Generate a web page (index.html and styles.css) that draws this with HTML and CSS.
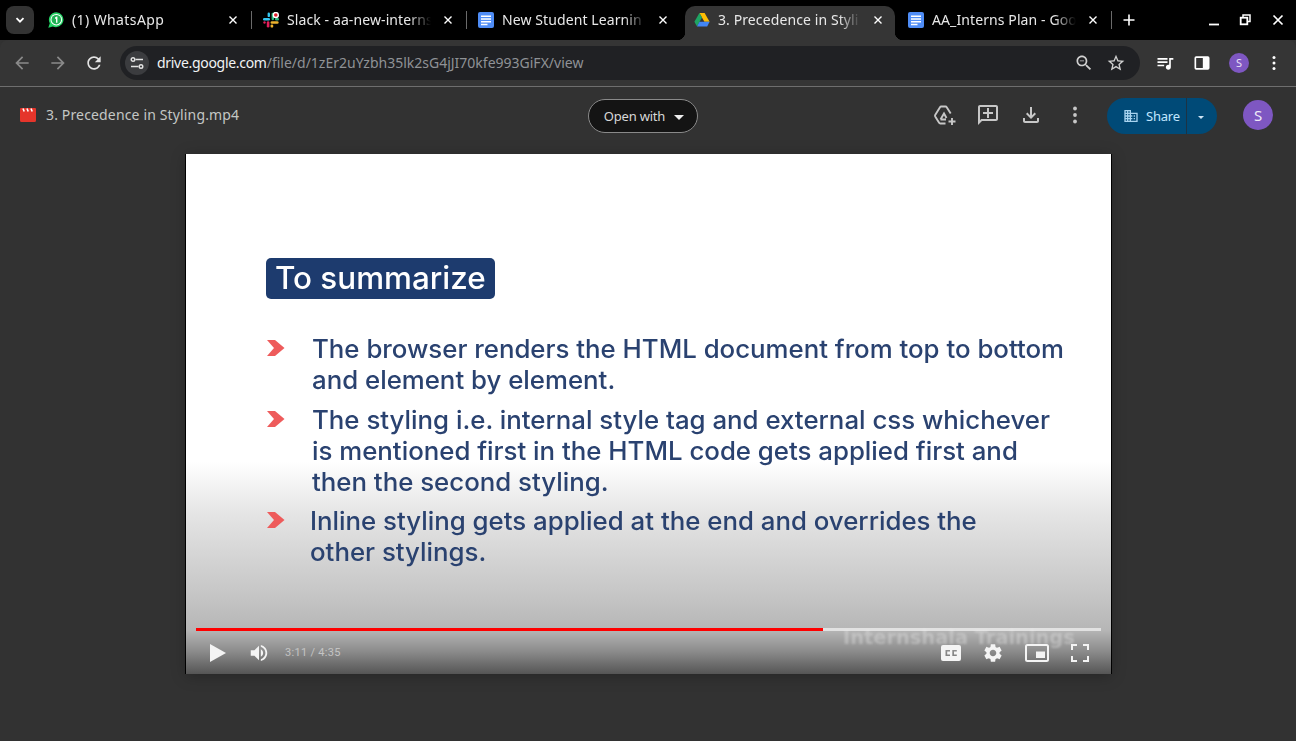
FILE: index.html
```html
<!DOCTYPE html>
<html lang="en">
<head>
    <meta charset="UTF-8">
    <meta name="viewport" content="width=device-width, initial-scale=1.0">
    <title>3. Precedence in Styling.mp4</title>
    <link rel="stylesheet" href="styles.css">
</head>
<body>

<!-- Tab strip -->
<div class="tabstrip">
    <div class="tab-search">
        <svg width="12" height="12" viewBox="0 0 12 12"><path d="M2.5 4.2 6 7.7l3.5-3.5" fill="none" stroke="#fff" stroke-width="1.8"/></svg>
    </div>
    <div class="tab">
        <svg class="favicon" viewBox="0 0 16 16"><path d="M8.3.3a7.4 7.4 0 0 0-6.5 11L.3 15.7l4.6-1.3A7.4 7.4 0 1 0 8.3.3z" fill="#25d366"/><circle cx="8.3" cy="7.7" r="5.8" fill="#fff"/><circle cx="8.3" cy="7.7" r="4.8" fill="#1fb254"/><path d="M7 5.6 8.7 4.6h.7v6.2H8V6.4l-1 .5z" fill="#fff"/></svg>
        <span class="tab-title tab-title-wide">(1) WhatsApp</span>
        <svg class="tab-close" viewBox="0 0 10 10"><path d="M1.5 1.5l7 7m0-7l-7 7" stroke="#fff" stroke-width="1.4"/></svg>
    </div>
    <div class="tab-sep"></div>
    <div class="tab">
        <svg class="favicon" viewBox="0 0 16 16">
            <rect x="0" y="6" width="7" height="2.4" rx="1.2" fill="#36c5f0"/><rect x="4.6" y="0.5" width="2.4" height="4.6" rx="1.2" fill="#36c5f0"/>
            <rect x="0.3" y="9.3" width="2.4" height="2.4" rx="1.2" fill="#e01e5a"/><rect x="3.8" y="9.3" width="2.6" height="6.2" rx="1.3" fill="#e01e5a"/>
            <rect x="8.6" y="0.8" width="2.4" height="7.4" rx="1.2" fill="#2eb67d"/><rect x="12" y="6" width="4" height="2.4" rx="1.2" fill="#2eb67d"/>
            <rect x="7.6" y="9.3" width="8" height="2.4" rx="1.2" fill="#ecb22e"/><rect x="7.6" y="12.4" width="2.6" height="3.2" rx="1.2" fill="#ecb22e"/>
            <circle cx="12.8" cy="3" r="3.2" fill="#fff"/><circle cx="12.8" cy="3" r="1.8" fill="#e01e2a"/>
        </svg>
        <span class="tab-title">Slack - aa-new-interns</span>
        <svg class="tab-close" viewBox="0 0 10 10"><path d="M1.5 1.5l7 7m0-7l-7 7" stroke="#fff" stroke-width="1.4"/></svg>
    </div>
    <div class="tab-sep"></div>
    <div class="tab">
        <svg class="favicon" viewBox="0 0 16 16"><rect width="16" height="16" rx="2" fill="#4f8df6"/><path d="M3 4.2h10M3 7h10M3 9.8h10M3 12.4h6.5" stroke="#fff" stroke-width="1.5"/></svg>
        <span class="tab-title">New Student Learnin</span>
        <svg class="tab-close" viewBox="0 0 10 10"><path d="M1.5 1.5l7 7m0-7l-7 7" stroke="#fff" stroke-width="1.4"/></svg>
    </div>
    <div class="tab tab-active">
        <svg class="favicon" viewBox="0 0 16 16"><path d="M5.4 1h5.2l5 8.8h-5.2z" fill="#fbbc04"/><path d="M5.4 1 .4 9.8 3 14.4 8 5.6z" fill="#1fa463"/><path d="M3 14.4h10.2l2.4-4.6H5.5z" fill="#4285f4"/></svg>
        <span class="tab-title">3. Precedence in Styli</span>
        <svg class="tab-close" viewBox="0 0 10 10"><path d="M1.5 1.5l7 7m0-7l-7 7" stroke="#fff" stroke-width="1.4"/></svg>
    </div>
    <div class="tab">
        <svg class="favicon" viewBox="0 0 16 16"><rect width="16" height="16" rx="2" fill="#4f8df6"/><path d="M3 4.2h10M3 7h10M3 9.8h10M3 12.4h6.5" stroke="#fff" stroke-width="1.5"/></svg>
        <span class="tab-title">AA_Interns Plan - Goo</span>
        <svg class="tab-close" viewBox="0 0 10 10"><path d="M1.5 1.5l7 7m0-7l-7 7" stroke="#fff" stroke-width="1.4"/></svg>
    </div>
    <div class="tab-sep"></div>
    <svg class="new-tab" viewBox="0 0 12 12"><path d="M6 .5v11M.5 6h11" stroke="#fff" stroke-width="1.6"/></svg>
    <div class="window-controls">
        <svg viewBox="0 0 12 12"><path d="M1 10.5h10" stroke="#fff" stroke-width="1.8"/></svg>
        <svg viewBox="0 0 12 12"><path d="M4 3V1h7v6.5H9" fill="none" stroke="#fff" stroke-width="1.5"/><rect x="1.7" y="3.7" width="6.6" height="6.6" fill="none" stroke="#fff" stroke-width="1.8"/></svg>
        <svg viewBox="0 0 12 12"><path d="M1.5 1.5l9 9m0-9l-9 9" stroke="#fff" stroke-width="1.7"/></svg>
    </div>
</div>

<!-- Address bar -->
<div class="toolbar">
    <svg class="tool-icon dim" viewBox="0 0 24 24"><path d="M20 11H7.83l5.59-5.59L12 4l-8 8 8 8 1.41-1.41L7.83 13H20v-2z"/></svg>
    <svg class="tool-icon dim" viewBox="0 0 24 24"><path d="M12 4l-1.41 1.41L16.17 11H4v2h12.17l-5.58 5.59L12 20l8-8z"/></svg>
    <svg class="tool-icon" viewBox="0 0 24 24"><path d="M17.65 6.35C16.2 4.9 14.21 4 12 4c-4.42 0-7.99 3.58-7.99 8s3.57 8 7.99 8c3.73 0 6.84-2.55 7.73-6h-2.08c-.82 2.33-3.04 4-5.65 4-3.31 0-6-2.69-6-6s2.69-6 6-6c1.66 0 3.14.69 4.22 1.78L13 11h7V4l-2.35 2.35z"/></svg>
    <div class="omnibox">
        <div class="site-info">
            <svg width="14" height="12" viewBox="0 0 14 12" fill="none" stroke="#e3e3e3" stroke-width="1.4"><path d="M5.5 2.5H13M1 9.5h7.5"/><circle cx="3" cy="2.5" r="1.8"/><circle cx="11" cy="9.5" r="1.8"/></svg>
        </div>
        <div class="url"><span class="url-host">drive.google.com</span>/file/d/1zEr2uYzbh35lk2sG4jJI70kfe993GiFX/view</div>
        <svg class="omni-icon" viewBox="0 0 24 24"><path d="M15.5 14h-.79l-.28-.27C15.41 12.59 16 11.11 16 9.5 16 5.91 13.09 3 9.5 3S3 5.91 3 9.5 5.91 16 9.5 16c1.61 0 3.09-.59 4.23-1.57l.27.28v.79l5 4.99L20.49 19l-4.99-5zm-6 0C7.01 14 5 11.99 5 9.5S7.01 5 9.5 5 14 7.01 14 9.5 11.99 14 9.5 14zM7 9h5v1H7z"/></svg>
        <svg class="omni-icon" viewBox="0 0 24 24"><path d="M22 9.24l-7.19-.62L12 2 9.19 8.63 2 9.24l5.46 4.73L5.82 21 12 17.27 18.18 21l-1.63-7.03L22 9.24zM12 15.4l-3.76 2.27 1-4.28-3.32-2.88 4.38-.38L12 6.1l1.71 4.04 4.38.38-3.32 2.88 1 4.28L12 15.4z"/></svg>
    </div>
    <div class="toolbar-right">
        <svg class="tool-icon white" viewBox="0 0 24 24"><path d="M15 6H3v2h12V6zm0 4H3v2h12v-2zM3 16h8v-2H3v2zM17 6v8.18c-.31-.11-.65-.18-1-.18-1.66 0-3 1.34-3 3s1.34 3 3 3 3-1.34 3-3V8h3V6h-5z"/></svg>
        <svg class="tool-icon white" viewBox="0 0 24 24"><path d="M3 6a2 2 0 0 1 2-2h14a2 2 0 0 1 2 2v12a2 2 0 0 1-2 2H5a2 2 0 0 1-2-2zm2 0v12h8V6z" fill-rule="evenodd"/></svg>
        <div class="profile-small">S</div>
        <svg class="tool-icon white" viewBox="0 0 24 24"><circle cx="12" cy="5.5" r="1.8"/><circle cx="12" cy="12" r="1.8"/><circle cx="12" cy="18.5" r="1.8"/></svg>
    </div>
</div>

<!-- Drive viewer -->
<div class="viewer">
    <div class="viewer-head">
        <div class="file-name">
            <svg width="16" height="14" viewBox="0 0 16 14"><path d="M0 1a1 1 0 0 1 1-1h14a1 1 0 0 1 1 1v11.5a1.5 1.5 0 0 1-1.5 1.5h-13A1.5 1.5 0 0 1 0 12.5z" fill="#e5352b"/><path d="M3 .5l1.2 3M7 .5l1.2 3M11 .5l1.2 3" stroke="#fff" stroke-width="1.6"/></svg>
            <span>3. Precedence in Styling.mp4</span>
        </div>
        <div class="open-with">
            <span>Open with</span>
            <span class="caret"></span>
        </div>
        <div class="head-actions">
            <svg class="act-icon" viewBox="0 0 24 24" fill="none" stroke="#c7c7c7" stroke-width="1.9"><path d="M13.5 20.5H8.3a1.5 1.5 0 0 1-1.2-.7L3.2 13.5a1.5 1.5 0 0 1 0-1.5L8 4.2a1.5 1.5 0 0 1 1.2-.7h4.3a1.5 1.5 0 0 1 1.2.7l4 6.3"/><path d="M8.5 16.5 12 10.5l2.5 4.5M8.5 16.5H14M20 15v7M16.5 18.5h7"/></svg>
            <svg class="act-icon fill" viewBox="0 0 24 24"><path d="M20 2H4c-1.1 0-2 .9-2 2v18l4-4h14c1.1 0 2-.9 2-2V4c0-1.1-.9-2-2-2zm0 14H5.17L4 17.17V4h16v12z"/><path d="M13 5h-2v4H7v2h4v4h2v-4h4V9h-4z"/></svg>
            <svg class="act-icon fill" viewBox="0 0 24 24"><path d="M18 15v3H6v-3H4v3c0 1.1.9 2 2 2h12c1.1 0 2-.9 2-2v-3h-2zm-1-4l-1.41-1.41L13 12.17V4h-2v8.17L8.41 9.59 7 11l5 5 5-5z"/></svg>
            <svg class="act-icon fill" viewBox="0 0 24 24"><circle cx="12" cy="5.5" r="1.9"/><circle cx="12" cy="12" r="1.9"/><circle cx="12" cy="18.5" r="1.9"/></svg>
            <div class="share">
                <div class="share-main">
                    <svg width="16" height="16" viewBox="0 0 24 24" fill="#a8d4f0"><path d="M12 7V3H2v18h20V7H12zM6 19H4v-2h2v2zm0-4H4v-2h2v2zm0-4H4V9h2v2zm0-4H4V5h2v2zm4 12H8v-2h2v2zm0-4H8v-2h2v2zm0-4H8V9h2v2zm0-4H8V5h2v2zm10 12h-8v-2h2v-2h-2v-2h2v-2h-2V9h8v10zm-2-8h-2v2h2v-2zm0 4h-2v2h2v-2z"/></svg>
                    <span>Share</span>
                </div>
                <div class="share-more"><span class="caret small"></span></div>
            </div>
            <div class="profile">S</div>
        </div>
    </div>

    <div class="video">
        <div class="slide">
            <div class="slide-title">To summarize</div>
            <div class="point">
                <svg class="chevron" viewBox="0 0 20 18"><path d="M1 1h8l9.500 8-9.500 8H1l7-8z" fill="#ee5b5b"/></svg>
                <p><span>The browser renders the HTML document from top to bottom</span><span>and element by element.</span></p>
            </div>
            <div class="point point-mid">
                <svg class="chevron" viewBox="0 0 20 18"><path d="M1 1h8l9.500 8-9.500 8H1l7-8z" fill="#ee5b5b"/></svg>
                <p><span>The styling i.e. internal style tag and external css whichever</span><span>is mentioned first in the HTML code gets applied first and</span><span>then the second styling.</span></p>
            </div>
            <div class="point point-last">
                <svg class="chevron" viewBox="0 0 20 18"><path d="M1 1h8l9.500 8-9.500 8H1l7-8z" fill="#ee5b5b"/></svg>
                <p><span>Inline styling gets applied at the end and overrides the</span><span>other stylings.</span></p>
            </div>
        </div>
        <div class="watermark">Internshala Trainings</div>
        <div class="player">
            <div class="progress"><div class="progress-played" style="width: 69.3%"></div></div>
            <div class="controls">
                <svg class="play" viewBox="0 0 16 18"><path d="M0 0l16 9-16 9z" fill="#f4f4f4"/></svg>
                <svg class="ctl" viewBox="0 0 24 24" fill="#f4f4f4"><path d="M3 9v6h4l5 5V4L7 9H3zm13.5 3c0-1.77-1.02-3.29-2.5-4.03v8.05c1.48-.73 2.5-2.25 2.5-4.02zM14 3.23v2.06c2.89.86 5 3.54 5 6.71s-2.11 5.85-5 6.71v2.06c4.01-.91 7-4.49 7-8.77s-2.99-7.86-7-8.77z"/></svg>
                <span class="time">3:11 / 4:35</span>
                <div class="controls-right">
                    <svg class="ctl cc" viewBox="0 0 20 16"><path fill-rule="evenodd" fill="#f4f4f4" d="M2 0h16a2 2 0 0 1 2 2v12a2 2 0 0 1-2 2H2a2 2 0 0 1-2-2V2a2 2 0 0 1 2-2zm2.500 5v6H9V9.400H6.200V6.600H9V5zm6.800 0v6h4.500V9.400H13V6.600h2.800V5z"/></svg>
                    <svg class="ctl" viewBox="0 0 24 24" fill="#f4f4f4"><path d="M19.14 12.94c.04-.3.06-.61.06-.94 0-.32-.02-.64-.07-.94l2.03-1.58c.18-.14.23-.41.12-.61l-1.92-3.32c-.12-.22-.37-.29-.59-.22l-2.39.96c-.5-.38-1.03-.7-1.62-.94l-.36-2.54c-.04-.24-.24-.41-.48-.41h-3.84c-.24 0-.43.17-.47.41l-.36 2.54c-.59.24-1.13.57-1.62.94l-2.39-.96c-.22-.08-.47 0-.59.22L2.74 8.87c-.12.21-.08.47.12.61l2.03 1.58c-.05.3-.09.63-.09.94s.02.64.07.94l-2.03 1.58c-.18.14-.23.41-.12.61l1.92 3.32c.12.22.37.29.59.22l2.39-.96c.5.38 1.03.7 1.62.94l.36 2.54c.05.24.24.41.48.41h3.84c.24 0 .44-.17.47-.41l.36-2.54c.59-.24 1.13-.56 1.62-.94l2.39.96c.22.08.47 0 .59-.22l1.92-3.32c.12-.22.07-.47-.12-.61l-2.01-1.58zM12 15.6c-1.98 0-3.6-1.62-3.6-3.6s1.62-3.6 3.6-3.6 3.6 1.62 3.6 3.6-1.62 3.6-3.6 3.6z"/></svg>
                    <svg class="ctl mini" viewBox="0 0 24 18" fill="none"><rect x="1" y="1" width="22" height="16" rx="1.5" stroke="#f4f4f4" stroke-width="2"/><rect x="11" y="7.5" width="9" height="6.5" fill="#f4f4f4"/></svg>
                    <svg class="ctl full" viewBox="0 0 18 18" fill="none" stroke="#f4f4f4" stroke-width="2"><path d="M1 6V1h5M12 1h5v5M17 12v5h-5M6 17H1v-5"/></svg>
                </div>
            </div>
        </div>
    </div>
</div>

</body>
</html>
```

FILE: styles.css
```css
/* Page */
* {
    box-sizing: border-box;
}

html, body {
    margin: 0;
    height: 100%;
}

body {
    width: 1296px;
    height: 741px;
    overflow: hidden;
    background: #323232;
    font-family: "Noto Sans", Roboto, sans-serif;
    color: #e3e3e3;
}

/* Tab strip */
.tabstrip {
    display: flex;
    align-items: center;
    height: 40px;
    background: #000;
    padding-left: 6px;
}

.tab-search {
    display: flex;
    align-items: center;
    justify-content: center;
    width: 28px;
    height: 28px;
    margin-right: 1px;
    border-radius: 8px;
    background: #333;
}

.tab {
    position: relative;
    display: flex;
    align-items: center;
    width: 215px;
    height: 34px;
    margin-top: 6px;
    padding: 0 12px 6px 13px;
    flex-shrink: 0;
}

.tab-sep {
    width: 1px;
    height: 18px;
    margin: 0 -1px 0 0;
    background: #6a6a6a;
    flex-shrink: 0;
    position: relative;
    left: 1px;
}

.tab-active {
    width: 210px;
    margin: 6px 0 0 5px;
    padding-left: 9px;
    background: #353535;
    border-radius: 10px 10px 0 0;
}

.tab-active::before,
.tab-active::after {
    content: "";
    position: absolute;
    bottom: 0;
    width: 8px;
    height: 8px;
}

.tab-active::before {
    left: -8px;
    background: radial-gradient(circle at 0 0, #000 8px, #353535 8.5px);
}

.tab-active::after {
    right: -8px;
    background: radial-gradient(circle at 100% 0, #000 8px, #353535 8.5px);
}

.favicon {
    width: 16px;
    height: 16px;
    flex-shrink: 0;
}

.tab-title {
    flex: 1;
    margin-left: 8px;
    overflow: hidden;
    white-space: nowrap;
    font-size: 14px;
    letter-spacing: 0.1px;
    line-height: 20px;
    color: #e8e8e8;
    -webkit-mask-image: linear-gradient(to right, #000 calc(100% - 26px), transparent calc(100% - 4px));
    mask-image: linear-gradient(to right, #000 calc(100% - 26px), transparent calc(100% - 4px));
}

.tab-title-wide {
    letter-spacing: 0.4px;
}

.tab-close {
    width: 10px;
    height: 10px;
    margin-left: 8px;
    flex-shrink: 0;
}

.new-tab {
    width: 12px;
    height: 12px;
    margin-left: 13px;
}

.window-controls {
    display: flex;
    align-items: center;
    gap: 19px;
    margin-left: auto;
    padding-right: 12px;
}

.window-controls svg {
    width: 12px;
    height: 12px;
}

.window-controls svg:last-child {
    margin-left: 2px;
}

/* Address bar */
.toolbar {
    display: flex;
    align-items: center;
    height: 47px;
    padding: 0 10px 1px 12px;
    background: #353535;
    border-bottom: 1px solid #6e6e6e;
    border-radius: 8px 8px 0 0;
}

.tool-icon {
    width: 20px;
    height: 20px;
    margin-right: 16px;
    fill: #e3e3e3;
    flex-shrink: 0;
}

.tool-icon.dim {
    fill: #8a8a8a;
}

.tool-icon.white {
    fill: #fff;
}

.omnibox {
    display: flex;
    align-items: center;
    width: 1020px;
    height: 34px;
    padding: 0 14px 0 5px;
    border-radius: 17px;
    background: #202124;
}

.site-info {
    display: flex;
    align-items: center;
    justify-content: center;
    width: 24px;
    height: 24px;
    border-radius: 50%;
    background: #3b3c3f;
}

.url {
    flex: 1;
    margin-left: 8px;
    font-size: 14px;
    color: #8f9296;
    white-space: nowrap;
}

.url-host {
    color: #f1f3f4;
    letter-spacing: -0.3px;
}

.omni-icon {
    width: 20px;
    height: 20px;
    margin-left: 12px;
    fill: #d0d0d0;
}

.toolbar-right {
    display: flex;
    align-items: center;
    margin-left: 15px;
}

.toolbar-right .tool-icon {
    margin-right: 17px;
}

.toolbar-right .tool-icon:last-child {
    margin-right: 0;
}

.profile-small {
    width: 20px;
    height: 20px;
    margin-right: 15px;
    border-radius: 50%;
    background: #7e57c2;
    font-size: 11px;
    line-height: 20px;
    text-align: center;
    color: #e8e0f5;
}

/* Drive viewer */
.viewer {
    height: 654px;
    background: #323232;
}

.viewer-head {
    display: grid;
    grid-template-columns: 568px 110px 1fr;
    align-items: center;
    height: 56px;
    padding: 0 23px 0 20px;
}

.file-name {
    display: flex;
    align-items: center;
    gap: 10px;
    margin-top: -1px;
    font-size: 14px;
    letter-spacing: 0.15px;
    color: #c4c7c5;
}

.open-with {
    display: flex;
    align-items: center;
    justify-content: center;
    gap: 9px;
    height: 34px;
    margin-top: 2px;
    padding-left: 2px;
    border: 1px solid #8a8a8a;
    border-radius: 17px;
    background: #141414;
    font-size: 13px;
    letter-spacing: -0.2px;
    color: #d8d8d8;
}

.caret {
    width: 0;
    height: 0;
    border-left: 5px solid transparent;
    border-right: 5px solid transparent;
    border-top: 5px solid #eee;
    margin-top: 2px;
}

.caret.small {
    border-left-width: 3.5px;
    border-right-width: 3.5px;
    border-top-width: 3.5px;
    border-top-color: #cfe4f5;
}

.head-actions {
    display: flex;
    align-items: center;
    justify-content: flex-end;
}

.act-icon {
    width: 24px;
    height: 24px;
    margin-right: 19.5px;
}

.act-icon.fill {
    fill: #c7c7c7;
}

.share {
    display: flex;
    align-items: stretch;
    width: 110px;
    height: 36px;
    margin: 2px 0 0 1px;
    border-radius: 18px;
    overflow: hidden;
    background: #004a77;
    color: #c2e7ff;
    font-size: 13px;
    letter-spacing: -0.2px;
}

.share-main {
    display: flex;
    align-items: center;
    gap: 7px;
    width: 80px;
    padding-left: 16px;
    border-right: 1px solid #1c3344;
}

.share-more {
    display: flex;
    align-items: center;
    justify-content: center;
    flex: 1;
    padding-right: 2px;
}

.profile {
    width: 30px;
    height: 30px;
    margin-left: 26px;
    border-radius: 50%;
    background: #7e57c2;
    font-size: 15px;
    line-height: 30px;
    text-align: center;
    color: #f0ebf8;
}

/* Video */
.video {
    position: relative;
    width: 925px;
    height: 520px;
    margin: 11px 0 0 186px;
    overflow: hidden;
    background: linear-gradient(to bottom, #fff 0, #fff 308px, #e4e4e4 362px, #c6c6c6 440px, #b6b6b6 476px, #8a8a8a 498px, #555 520px);
    box-shadow: -1px 0 0 #000, 1px 0 0 #000, 0 2px 14px rgba(0, 0, 0, 0.25);
}

.slide {
    padding: 104px 0 0 80px;
    font-family: Inter, "Open Sans", sans-serif;
    color: #2a4270;
    filter: blur(0.5px);
}

.slide-title {
    width: 229px;
    height: 41px;
    margin-bottom: 34px;
    padding-left: 9px;
    border-radius: 5px;
    background: #1d3b6e;
    font-size: 31.4px;
    font-weight: 500;
    line-height: 41px;
    color: #fff;
}

.point {
    display: flex;
    margin-bottom: 9px;
}

.point p {
    margin: 0;
    font-size: 25.8px;
    font-weight: 500;
    line-height: 31px;
}

.point p span {
    display: block;
    white-space: nowrap;
}

.chevron {
    width: 20px;
    height: 18px;
    margin: 6px 26px 0 0;
    flex-shrink: 0;
}

.point-mid {
    margin-bottom: 8px;
}

.point-last p {
    margin-left: -2px;
}

.watermark {
    position: absolute;
    left: 657px;
    top: 472px;
    font-family: "DejaVu Sans", sans-serif;
    font-size: 19.4px;
    font-weight: 700;
    white-space: nowrap;
    color: rgba(225, 225, 225, 0.42);
    filter: blur(1.2px);
}

.player {
    position: absolute;
    left: 10px;
    right: 10px;
    bottom: 0;
}

.progress {
    height: 3px;
    background: rgba(240, 240, 240, 0.75);
}

.progress-played {
    height: 100%;
    background: #f00;
}

.controls {
    display: flex;
    align-items: center;
    height: 43px;
    padding: 0 0 0 14px;
}

.play {
    width: 16px;
    height: 18px;
    margin-right: 22px;
}

.ctl {
    width: 22px;
    height: 22px;
    flex-shrink: 0;
}

.time {
    margin-left: 15px;
    font-family: Roboto, sans-serif;
    font-size: 11px;
    letter-spacing: 0.3px;
    color: #c4c4c4;
}

.controls-right {
    display: flex;
    align-items: center;
    margin-left: auto;
    padding-right: 12px;
}

.controls-right .cc {
    width: 20px;
    height: 16px;
    margin-right: 21px;
}

.controls-right .mini {
    width: 24px;
    height: 18px;
    margin: 0 22px 0 21px;
}

.controls-right .full {
    width: 18px;
    height: 18px;
}
```
